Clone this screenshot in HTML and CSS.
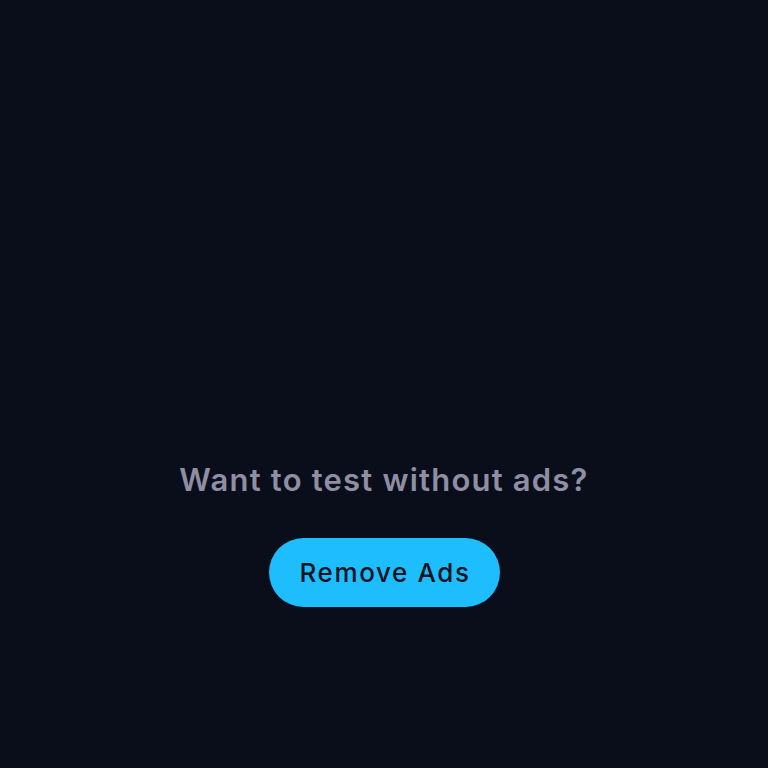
FILE: index.html
```html
<!DOCTYPE html>
<html>
<head>
<meta charset="utf-8">
<link rel="stylesheet" href="styles.css">
</head>
<body>
<main class="page">
  <p class="prompt">Want to test without ads?</p>
  <button class="remove-btn">Remove Ads</button>
</main>
</body>
</html>
```
FILE: styles.css
```css
html, body {
  margin: 0;
  padding: 0;
  background: #0a0d1a;
}
.page {
  width: 768px;
  height: 768px;
  box-sizing: border-box;
  padding-top: 462px;
  display: flex;
  flex-direction: column;
  align-items: center;
  font-family: Inter, "Noto Sans", sans-serif;
}
.prompt {
  margin: 0;
  height: 36px;
  line-height: 36px;
  font-size: 31px;
  font-weight: 600;
  color: #8f8ea3;
  letter-spacing: 1.2px;
}
.remove-btn {
  margin-top: 40px;
  width: 231px;
  height: 69px;
  border: none;
  border-radius: 35px;
  background: #1ebdfd;
  color: #0b1222;
  font-family: Inter, "Noto Sans", sans-serif;
  font-size: 26px;
  font-weight: 500;
  letter-spacing: 1.6px;
  padding: 0 0 0 2px;
}
```
